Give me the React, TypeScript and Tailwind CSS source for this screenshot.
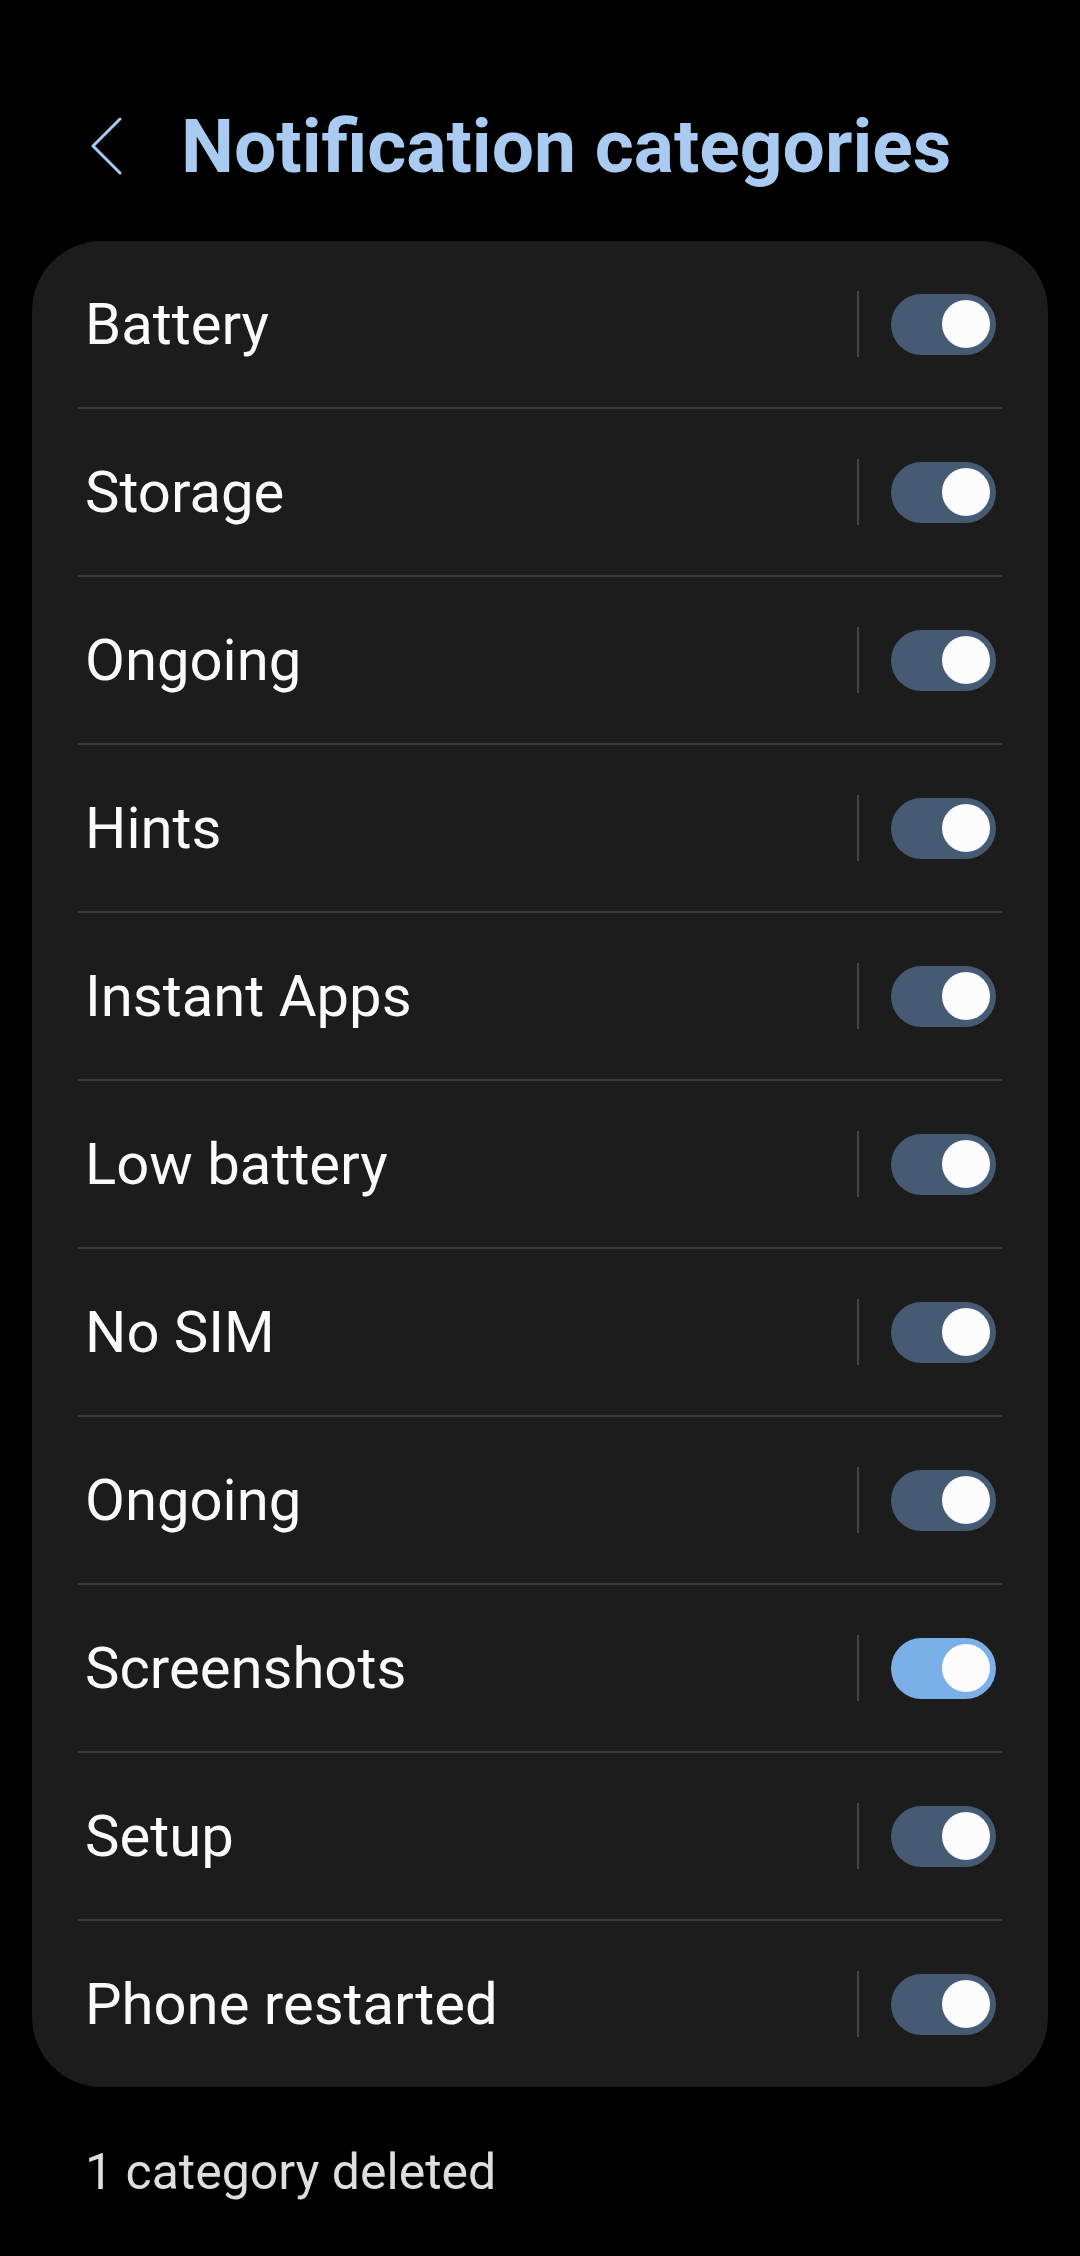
import { useState } from 'react';

const CATEGORIES = [
  { name: 'Battery', on: true },
  { name: 'Storage', on: true },
  { name: 'Ongoing', on: true },
  { name: 'Hints', on: true },
  { name: 'Instant Apps', on: true },
  { name: 'Low battery', on: true },
  { name: 'No SIM', on: true },
  { name: 'Ongoing', on: true },
  { name: 'Screenshots', on: true, highlight: true },
  { name: 'Setup', on: true },
  { name: 'Phone restarted', on: true },
];

function Toggle({ on, highlight }: { on: boolean; highlight?: boolean }) {
  return (
    <div
      className={`flex h-[61px] w-[105px] items-center rounded-full px-[6px] ${on ? 'justify-end' : 'justify-start'} ${
        highlight ? 'bg-[#7aafe7]' : 'bg-[#465a74]'
      }`}
    >
      <div className="h-[48px] w-[48px] rounded-full bg-[#fcfcfd]" />
    </div>
  );
}

export default function App() {
  const [rows] = useState(CATEGORIES);

  return (
    <div className="flex min-h-[2256px] w-[1080px] flex-col bg-black pt-[106px] font-['Roboto',sans-serif] text-white">
      <header className="mb-[55px] flex h-[80px] items-center pl-[89px]">
        <svg width="34" height="58" viewBox="0 0 34 58" className="shrink-0">
          <path d="M31 2 L4 29 L31 56" fill="none" stroke="#a9cbf1" strokeWidth="3" strokeLinejoin="round" strokeLinecap="round" />
        </svg>
        <h1 className="ml-[58px] text-[75px] font-bold leading-[80px] text-[#a9cbf1]">
          Notification categories
        </h1>
      </header>

      <div className="mx-[32px] overflow-hidden rounded-[70px] bg-[#1c1c1c]">
        {rows.map((row, i) => (
          <div key={i}>
            {i > 0 && <div className="mx-[46px] h-[2px] bg-[#393939]" />}
            <div className="flex h-[166px] items-center pl-[53px] pr-[52px]">
              <span className="flex-1 text-[58px] leading-[70px] text-[#fafafa]">{row.name}</span>
              <div className="h-[66px] w-[2px] bg-[#454545]" />
              <div className="ml-[32px]">
                <Toggle on={row.on} highlight={row.highlight} />
              </div>
            </div>
          </div>
        ))}
      </div>

      <p className="mt-[55px] pl-[85px] text-[50px] leading-[60px] text-[#dedede]">1 category deleted</p>
    </div>
  );
}
